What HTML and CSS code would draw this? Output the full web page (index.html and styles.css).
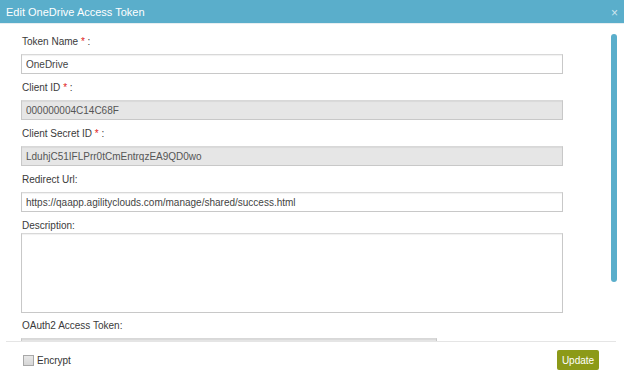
FILE: index.html
```html
<!DOCTYPE html>
<html lang="en">
<head>
    <meta charset="UTF-8">
    <title>Edit OneDrive Access Token</title>
    <link rel="stylesheet" href="styles.css">
</head>
<body>
    <div class="dialog">
        <div class="dialog-header">
            <span class="dialog-title">Edit OneDrive Access Token</span>
            <span class="dialog-close">&times;</span>
        </div>
        <div class="dialog-body">
            <label class="field-label">Token Name <span class="req">*</span> :</label>
            <input type="text" class="form-input" value="OneDrive">

            <label class="field-label">Client ID <span class="req">*</span> :</label>
            <input type="text" class="form-input readonly" value="000000004C14C68F" readonly>

            <label class="field-label">Client Secret ID <span class="req">*</span> :</label>
            <input type="text" class="form-input readonly" value="LduhjC51IFLPrr0tCmEntrqzEA9QD0wo" readonly>

            <label class="field-label">Redirect Url:</label>
            <input type="text" class="form-input" value="https://qaapp.agilityclouds.com/manage/shared/success.html">

            <label class="field-label tight">Description:</label>
            <textarea class="form-input form-textarea"></textarea>

            <label class="field-label">OAuth2 Access Token:</label>
            <input type="text" class="form-input readonly short" readonly>

            <div class="scrollbar"></div>
        </div>
        <div class="dialog-footer">
            <label class="encrypt">
                <input type="checkbox" class="check">
                Encrypt
            </label>
            <button class="update-btn">Update</button>
        </div>
    </div>
</body>
</html>
```

FILE: styles.css
```css
* {
    margin: 0;
    padding: 0;
    box-sizing: border-box;
    font-family: "Liberation Sans", Arial, sans-serif;
}
body {
    background: #fff;
}
.dialog {
    width: 624px;
    height: 381px;
    display: flex;
    flex-direction: column;
    background: #fff;
}
.dialog-header {
    height: 24px;
    background: #5aaecb;
    border-bottom: 1px solid #e6eef1;
    display: flex;
    align-items: center;
    justify-content: space-between;
    padding: 0 6px 0 6px;
}
.dialog-title {
    color: #fff;
    font-size: 11px;
    line-height: 14px;
    margin-top: 1px;
}
.dialog-close {
    color: #cfe6ee;
    font-size: 12px;
    line-height: 12px;
    margin-top: 3px;
}
.dialog-body {
    position: relative;
    height: 317px;
    overflow: hidden;
    padding: 11px 61px 0 21px;
    display: flex;
    flex-direction: column;
    align-items: flex-start;
}
.field-label {
    display: block;
    font-size: 10px;
    line-height: 14px;
    color: #3a3a3a;
    margin: 0 0 5px 1px;
}
.field-label.tight {
    margin-bottom: 0;
}
.req {
    color: #e02020;
}
.form-input {
    width: 100%;
    height: 20px;
    flex-shrink: 0;
    padding: 0 4px;
    margin-bottom: 7px;
    font-size: 10px;
    color: #444;
    background: #fff;
    border: 1px solid #c8c8c8;
    border-top-color: #d8d8d8;
    box-shadow: inset 0 1px 1px rgba(0, 0, 0, 0.06);
    outline: none;
}
.form-input.readonly {
    background: #e6e6e6;
    color: #555;
}
.form-textarea {
    height: 80px;
    resize: none;
    margin-bottom: 6px;
}
.form-input.short {
    width: 416px;
}
.scrollbar {
    position: absolute;
    right: 7px;
    top: 10px;
    width: 6px;
    height: 248px;
    border-radius: 3px;
    background: #5aaecb;
}
.dialog-footer {
    height: 40px;
    margin: 0 8px 0 6px;
    border-top: 1px solid #e5e5e5;
    display: flex;
    justify-content: space-between;
    align-items: flex-start;
    padding: 8px 17px 0 17px;
}
.encrypt {
    display: flex;
    align-items: center;
    height: 20px;
    font-size: 10px;
    color: #333;
}
.check {
    appearance: none;
    width: 11px;
    height: 11px;
    margin-right: 3px;
    border: 1px solid #a8a8a8;
    background: linear-gradient(#e8e8e8, #d6d6d6);
}
.update-btn {
    height: 20px;
    width: 42px;
    background: #8c9a18;
    color: #fff;
    border: none;
    border-radius: 2px;
    font-size: 10px;
    cursor: pointer;
}
```
